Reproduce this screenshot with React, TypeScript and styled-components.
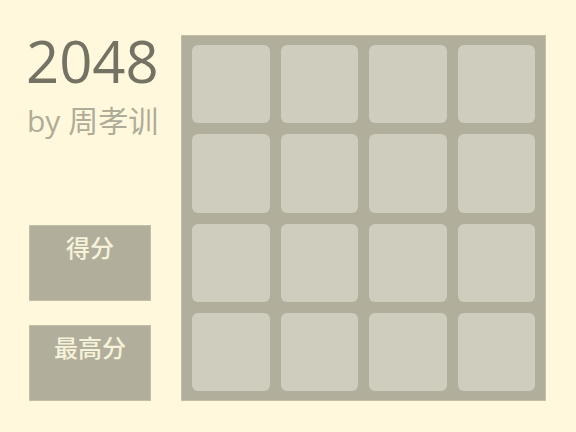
import React from "react";
import styled, { createGlobalStyle } from "styled-components";

const Global = createGlobalStyle`
  html, body { margin: 0; padding: 0; background: #fff8dc; }
  body { font-family: "Open Sans", "Noto Sans CJK SC", sans-serif; }
`;

const Page = styled.div`
  width: 576px;
  height: 432px;
  display: flex;
  flex-direction: row;
  align-items: flex-start;
  padding-left: 29px;
  box-sizing: border-box;
  background: #fff8dc;
  overflow: hidden;
`;

const Side = styled.div`
  width: 122px;
  display: flex;
  flex-direction: column;
`;

const Title = styled.h1`
  margin: 32px 0 0 -3px;
  font-family: "Open Sans", sans-serif;
  font-size: 58px;
  line-height: 58px;
  font-weight: 500;
  color: #747263;
  white-space: nowrap;
`;

const Author = styled.div`
  margin: 16px 0 0 -2px;
  font-size: 30px;
  line-height: 30px;
  color: #afac97;
  white-space: nowrap;
`;

const ScoreBox = styled.div<{ $top: number }>`
  margin-top: ${(p) => p.$top}px;
  height: 76px;
  background: #b1ae9b;
  border: 1px solid #c2bfa9;
  box-sizing: border-box;
  display: flex;
  flex-direction: column;
  align-items: center;
  padding-top: 6px;
  color: #f7f2da;
  font-size: 24px;
  line-height: 32px;
  font-weight: 500;
`;

const Board = styled.div`
  margin: 35px 0 0 30px;
  width: 365px;
  height: 366px;
  box-sizing: border-box;
  padding: 9px 10px 9px 10px;
  background: #b1ae9b;
  border: 1px solid #c2bfa9;
  display: grid;
  grid-template-columns: repeat(4, 1fr);
  grid-template-rows: repeat(4, 1fr);
  column-gap: 11px;
  row-gap: 11px;
`;

const Tile = styled.div`
  background: #cfcdbd;
  border-radius: 6px;
`;

export default function App() {
  const tiles = Array.from({ length: 16 }, (_, i) => i);
  return (
    <>
      <Global />
      <Page>
        <Side>
          <Title>2048</Title>
          <Author>by 周孝训</Author>
          <ScoreBox $top={89}>得分</ScoreBox>
          <ScoreBox $top={24}>最高分</ScoreBox>
        </Side>
        <Board>
          {tiles.map((t) => (
            <Tile key={t} />
          ))}
        </Board>
      </Page>
    </>
  );
}
